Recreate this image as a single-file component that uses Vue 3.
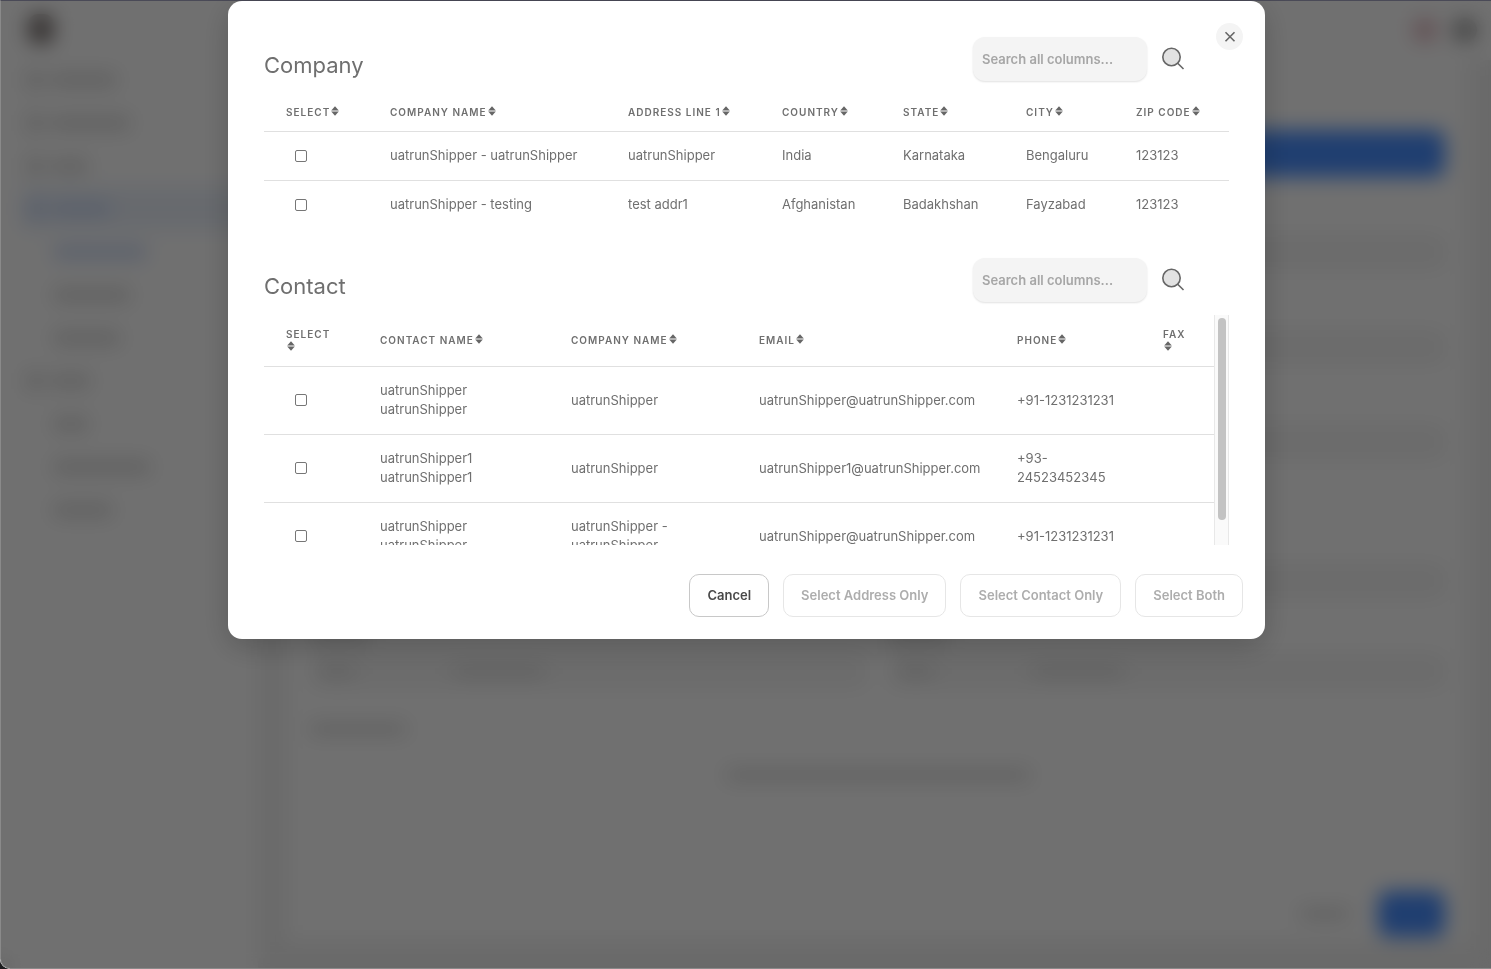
<template>
  <div class="app">
    <!-- Page behind the dialog, always shown blurred -->
    <div class="page" aria-hidden="true">
      <aside class="sidebar">
        <div class="logo"></div>
        <div
          v-for="(item, i) in navItems"
          :key="i"
          class="nav-item"
          :class="{ active: item.active, sub: item.sub, accent: item.accent }"
        >
          <span v-if="!item.sub" class="nav-icon"></span>
          <span class="nav-label" :style="{ width: item.width + 'px' }"></span>
        </div>
      </aside>

      <div class="main">
        <div class="topbar">
          <span class="dot pink"></span>
          <span class="dot dark"></span>
        </div>
        <div class="card">
          <div class="banner"></div>
          <div class="field first"></div>
          <div class="field"></div>
          <div class="field"></div>
          <div class="field spaced"></div>
          <div class="pair labels">
            <div class="bar label"></div>
            <div class="bar label"></div>
          </div>
          <div class="pair">
            <div v-for="n in 2" :key="n" class="field filled">
              <span class="bar tiny"></span>
              <span class="bar short"></span>
            </div>
          </div>
          <div class="bar section"></div>
          <div class="bar notice"></div>
          <div class="card-footer">
            <span class="bar back"></span>
            <span class="submit"></span>
          </div>
        </div>
      </div>
    </div>

    <div class="overlay">
      <div class="modal" role="dialog" aria-modal="true">
        <button class="close-btn" type="button" aria-label="Close">
          <svg viewBox="0 0 12 12" width="12" height="12">
            <path d="M1.5 1.2L10.5 10.2M10.5 1.2L1.5 10.2" />
          </svg>
        </button>

        <section
          v-for="table in tables"
          :key="table.key"
          class="block"
          :class="table.key"
        >
          <div class="block-head">
            <h2>{{ table.title }}</h2>
            <div class="search">
              <input
                v-model="table.query"
                type="text"
                placeholder="Search all columns..."
                aria-label="Search all columns..."
              >
              <svg class="search-icon" viewBox="0 0 24 24" width="24" height="24">
                <circle cx="10.5" cy="10" r="8.7" />
                <path d="M16.7 16.2L22.5 22" />
              </svg>
            </div>
          </div>

          <div class="table-wrap">
            <div class="table-scroll" @scroll="onScroll">
              <table>
                <colgroup>
                  <col
                    v-for="col in table.columns"
                    :key="col.label"
                    :style="{ width: colWidth(table, col) }"
                  >
                </colgroup>
                <thead>
                  <tr>
                    <th v-for="col in table.columns" :key="col.label" @click="sortBy(table, col)">
                      {{ col.label }}<wbr><svg class="sort-icon" viewBox="0 0 8 10" width="8" height="10">
                        <path d="M4 0.2L7.8 4.4H0.2Z" />
                        <path d="M4 9.8L7.8 5.6H0.2Z" />
                      </svg>
                    </th>
                  </tr>
                </thead>
                <tbody>
                  <tr v-for="row in visibleRows(table)" :key="row.id">
                    <td>
                      <input
                        v-model="table.selected"
                        type="checkbox"
                        :value="row.id"
                        :aria-label="row.cells[0]"
                      >
                    </td>
                    <td v-for="(cell, c) in row.cells" :key="c">{{ cell }}</td>
                  </tr>
                </tbody>
              </table>
            </div>
            <div v-if="table.key === 'contact'" class="scroll-track" aria-hidden="true">
              <div :style="{ height: scroll.before + '%' }"></div>
              <div class="scroll-thumb" :style="{ height: scroll.thumb + '%' }"></div>
            </div>
          </div>
        </section>

        <div class="actions">
          <button type="button">Cancel</button>
          <button type="button" :disabled="!hasCompany">Select Address Only</button>
          <button type="button" :disabled="!hasContact">Select Contact Only</button>
          <button type="button" :disabled="!hasCompany || !hasContact">Select Both</button>
        </div>
      </div>
    </div>
  </div>
</template>

<script setup>
import { computed, reactive } from 'vue'

const navItems = [
  { width: 64 },
  { width: 78 },
  { width: 36 },
  { width: 58, active: true, accent: true },
  { width: 92, sub: true, accent: true },
  { width: 76, sub: true },
  { width: 66, sub: true },
  { width: 38 },
  { width: 34, sub: true },
  { width: 96, sub: true },
  { width: 58, sub: true }
]

const tables = reactive([
  {
    key: 'company',
    title: 'Company',
    query: '',
    selected: [],
    sort: null,
    columns: [
      { label: 'SELECT', size: 104 },
      { label: 'COMPANY NAME', size: 238 },
      { label: 'ADDRESS LINE 1', size: 154 },
      { label: 'COUNTRY', size: 121 },
      { label: 'STATE', size: 123 },
      { label: 'CITY', size: 110 },
      { label: 'ZIP CODE', size: 115 }
    ],
    rows: [
      { id: 1, cells: ['uatrunShipper - uatrunShipper', 'uatrunShipper', 'India', 'Karnataka', 'Bengaluru', '123123'] },
      { id: 2, cells: ['uatrunShipper - testing', 'test addr1', 'Afghanistan', 'Badakhshan', 'Fayzabad', '123123'] }
    ]
  },
  {
    key: 'contact',
    title: 'Contact',
    query: '',
    selected: [],
    sort: null,
    columns: [
      { label: 'SELECT', size: 94 },
      { label: 'CONTACT NAME', size: 191 },
      { label: 'COMPANY NAME', size: 188 },
      { label: 'EMAIL', size: 258 },
      { label: 'PHONE', size: 146 },
      { label: 'FAX', size: 73 }
    ],
    rows: [
      { id: 1, cells: ['uatrunShipper uatrunShipper', 'uatrunShipper', 'uatrunShipper@uatrunShipper.com', '+91-1231231231', ''] },
      { id: 2, cells: ['uatrunShipper1 uatrunShipper1', 'uatrunShipper', 'uatrunShipper1@uatrunShipper.com', '+93-24523452345', ''] },
      { id: 3, cells: ['uatrunShipper uatrunShipper', 'uatrunShipper - uatrunShipper', 'uatrunShipper@uatrunShipper.com', '+91-1231231231', ''] }
    ]
  }
])

// Share of the track, in percent
const scroll = reactive({ before: 0, thumb: 90 })

const onScroll = (e) => {
  const { scrollTop, clientHeight, scrollHeight } = e.target
  scroll.before = (scrollTop / scrollHeight) * 100
  scroll.thumb = (clientHeight / scrollHeight) * 100
}

const hasCompany = computed(() => tables[0].selected.length > 0)
const hasContact = computed(() => tables[1].selected.length > 0)

const colWidth = (table, col) => {
  const total = table.columns.reduce((sum, c) => sum + c.size, 0)
  return (col.size / total) * 100 + '%'
}

const sortBy = (table, col) => {
  // First column holds the checkbox, nothing to sort on
  const index = table.columns.indexOf(col) - 1
  if (index < 0) return
  const dir = table.sort && table.sort.index === index ? -table.sort.dir : 1
  table.sort = { index, dir }
}

const visibleRows = (table) => {
  const q = table.query.trim().toLowerCase()
  const rows = table.rows.filter(r => !q || r.cells.some(c => c.toLowerCase().includes(q)))
  if (!table.sort) return rows
  const { index, dir } = table.sort
  return rows.sort((a, b) => a.cells[index].localeCompare(b.cells[index]) * dir)
}
</script>

<style>
body {
  margin: 0;
  background: #1c1c1e;
}
</style>

<style scoped>
.app {
  position: relative;
  min-height: 100vh;
  overflow: hidden;
  border-radius: 0 0 0 10px;
  font-family: Inter, "Liberation Sans", sans-serif;
  color: #6f6f6f;
}
.app * {
  box-sizing: border-box;
}

/* Page behind */
.page {
  display: grid;
  grid-template-columns: 258px 1fr;
  min-height: 100vh;
  background: #fff;
}
.sidebar {
  padding: 14px 0 0 22px;
}
.logo {
  width: 26px;
  height: 30px;
  margin: 0 0 14px 6px;
  border-radius: 10px;
  background: #7c7472;
}
.nav-item {
  display: flex;
  align-items: center;
  gap: 8px;
  height: 43px;
  padding-left: 4px;
}
.nav-item.sub {
  padding-left: 32px;
}
.nav-item.active {
  background: #ebf1fb;
}
.nav-icon {
  width: 18px;
  height: 18px;
  background: #dcdcdc;
}
.nav-label {
  height: 14px;
  background: #dadada;
}
.nav-item.accent span {
  background: #ccdaf6;
}
.main {
  display: flex;
  flex-direction: column;
  background: #f1f1f1;
}
.topbar {
  display: flex;
  justify-content: flex-end;
  align-items: center;
  gap: 16px;
  height: 60px;
  padding-right: 14px;
  background: #fff;
}
.dot {
  width: 24px;
  height: 24px;
  border-radius: 12px;
}
.dot.pink {
  background: #e2b8c0;
}
.dot.dark {
  background: #9a9a9a;
}
.card {
  flex: 1;
  display: flex;
  flex-direction: column;
  margin: 0 24px 27px 28px;
  padding: 70px 22px 5px 24px;
  background: #fff;
}
.banner {
  height: 47px;
  border-radius: 10px;
  background: #488eff;
}
.field {
  height: 34px;
  margin-top: 61px;
  border-radius: 10px;
  background: #f4f4f4;
}
.field.first {
  margin-top: 58px;
}
.field.spaced {
  margin-top: 105px;
}
.field.filled {
  display: flex;
  align-items: center;
  gap: 100px;
  margin-top: 12px;
  padding-left: 10px;
}
.pair {
  display: grid;
  grid-template-columns: 1fr 1fr;
  gap: 22px;
}
.pair.labels {
  margin-top: 32px;
}
.bar {
  height: 12px;
  background: #dcdcdc;
}
.bar.label {
  width: 60px;
}
.bar.tiny {
  width: 34px;
}
.bar.short {
  width: 90px;
}
.bar.section {
  width: 96px;
  margin-top: 35px;
}
.bar.notice {
  align-self: center;
  width: 304px;
  margin-top: 34px;
}
.bar.back {
  width: 50px;
}
.card-footer {
  display: flex;
  justify-content: flex-end;
  align-items: center;
  gap: 28px;
  margin-top: auto;
}
.submit {
  width: 67px;
  height: 46px;
  border-radius: 10px;
  background: #488eff;
}

/* Overlay */
.overlay {
  position: absolute;
  inset: 0;
  padding-left: 1px;
  border: 1px solid #8a8a8a;
  border-top-color: #4a4a57;
  border-right: 0;
  border-radius: 0 0 0 10px;
  background: rgba(0, 0, 0, 0.56);
  backdrop-filter: blur(10px);
}
.modal {
  position: relative;
  width: 92%;
  max-width: 1037px;
  margin: 0 auto;
  padding: 36px 36px 22px;
  border-radius: 14px;
  background: #fff;
  box-shadow: 0 8px 30px rgba(0, 0, 0, 0.2);
}
.close-btn {
  position: absolute;
  top: 22px;
  right: 22px;
  display: flex;
  align-items: center;
  justify-content: center;
  width: 27px;
  height: 27px;
  padding: 0;
  border: 0;
  border-radius: 50%;
  background: #f4f4f4;
  cursor: pointer;
}
.close-btn svg {
  fill: none;
  stroke: #666;
  stroke-width: 1.6;
}

/* Table blocks */
.block + .block {
  margin-top: 29px;
}
.block-head {
  display: flex;
  justify-content: space-between;
  align-items: flex-end;
  padding-right: 44px;
  margin-bottom: 13px;
}
.block-head h2 {
  margin: 0;
  font-size: 22px;
  font-weight: 400;
  line-height: 32px;
}
.search {
  display: flex;
  align-items: center;
  gap: 14px;
}
.search input {
  width: 174px;
  height: 44px;
  padding: 0 9px 1px;
  border: 0;
  border-radius: 12px;
  background: #f4f4f4;
  box-shadow: 0 1px 2px rgba(0, 0, 0, 0.12);
  font: 600 13px Inter, "Liberation Sans", sans-serif;
  color: #6f6f6f;
  outline: none;
}
.search input::placeholder {
  color: #a6a6a6;
}
.search-icon {
  fill: #e2e2e2;
  stroke: #666;
  stroke-width: 1.6;
}

.table-wrap {
  display: flex;
}
.table-scroll {
  flex: 1;
  min-width: 0;
}
table {
  width: 100%;
  border-collapse: separate;
  border-spacing: 0;
  table-layout: fixed;
}
th {
  padding: 12px 22px;
  border-bottom: 1px solid #e0e0e0;
  font-size: 10px;
  font-weight: 600;
  line-height: 13px;
  letter-spacing: 1px;
  text-align: left;
  cursor: pointer;
}
.company th {
  padding-right: 0;
  white-space: nowrap;
}
.sort-icon {
  margin-left: 1px;
  fill: #666;
}
td {
  padding: 14px 22px 15px;
  font-size: 13px;
  line-height: 19px;
}
.company td {
  padding-right: 0;
}
tr:not(:last-child) td {
  border-bottom: 1px solid #e0e0e0;
}
td input {
  display: block;
  appearance: none;
  width: 12px;
  height: 12px;
  margin: 0 0 0 9px;
  border: 1px solid #767676;
  border-radius: 2px;
  background: #fff;
}
td input:checked {
  background: #2f7cf6;
}
.contact .table-wrap {
  height: 230px;
}
.contact .table-scroll {
  overflow-y: scroll;
  scrollbar-width: none;
}
.contact th {
  height: 52px;
}
.contact td:nth-child(4) {
  padding-right: 0;
}
.scroll-track {
  width: 15px;
  padding: 3px;
  border: 1px solid #e8e8e8;
  border-width: 0 1px;
  background: #fafafa;
}
.scroll-thumb {
  width: 8px;
  border-radius: 4px;
  background: #c3c3c3;
}

/* Footer buttons */
.actions {
  display: flex;
  justify-content: flex-end;
  gap: 14px;
  margin: 29px -14px 0 0;
}
.actions button {
  height: 43px;
  padding: 0 17px 2px;
  border: 1px solid #c8c8c8;
  border-radius: 10px;
  background: #fff;
  font: 600 13px Inter, "Liberation Sans", sans-serif;
  color: #484848;
  cursor: pointer;
}
.actions button:disabled {
  border-color: #e6e6e6;
  color: #adadad;
  cursor: default;
}
</style>
